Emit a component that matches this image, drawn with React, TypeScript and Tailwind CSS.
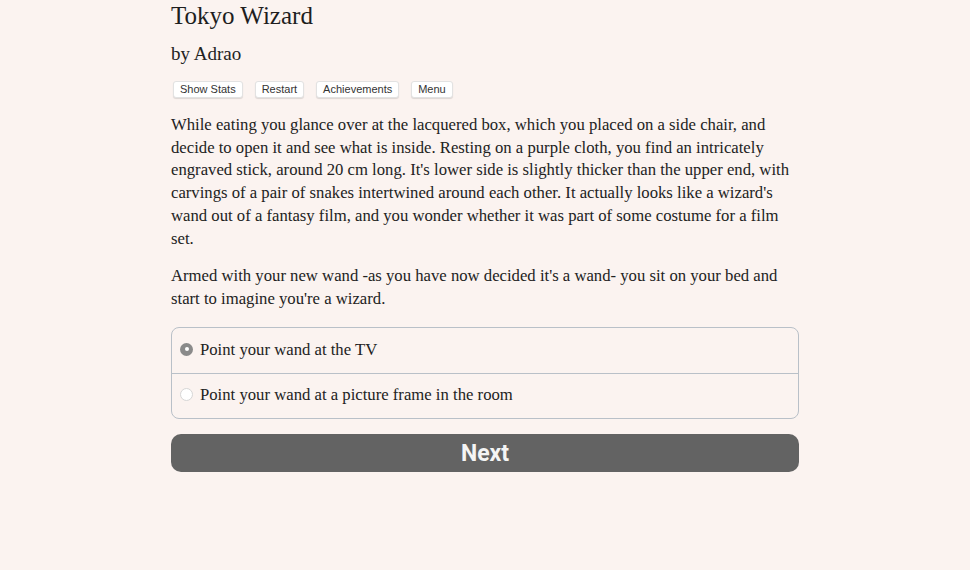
const serif = { fontFamily: '"Liberation Serif", "DejaVu Serif", serif' }

const buttons = ["Show Stats", "Restart", "Achievements", "Menu"]

const choices = [
  { label: "Point your wand at the TV", checked: true },
  { label: "Point your wand at a picture frame in the room", checked: false },
]

export default function App() {
  return (
    <div className="min-h-[570px] w-full bg-[#fbf3f0] text-[#222]" style={serif}>
      <div className="mx-auto w-[628px]">
        <h1 className="pt-[1px] text-[25px] leading-[30px] text-[#1e1e1e]">Tokyo Wizard</h1>
        <h2 className="mt-[11px] text-[19px] leading-[24px]">by Adrao</h2>
        <div className="ml-[2px] mt-[15px] flex gap-[12px] font-['Liberation_Sans',sans-serif]">
          {buttons.map((b) => (
            <button
              key={b}
              className="h-[17px] rounded-[3px] border border-[#e2e2e2] bg-white px-[6px] text-[11px] leading-[15px] text-[#333] shadow-[0_1px_1px_rgba(0,0,0,0.12)]"
            >
              {b}
            </button>
          ))}
        </div>
        <div className="mt-[16px] text-[16.7px] leading-[22.7px]">
          <p>
            While eating you glance over at the lacquered box, which you placed on a side chair, and decide to open
            it and see what is inside. Resting on a purple cloth, you find an intricately engraved stick, around 20 cm
            long. It's lower side is slightly thicker than the upper end, with carvings of a pair of snakes intertwined
            around each other. It actually looks like a wizard's wand out of a fantasy film, and you wonder whether it
            was part of some costume for a film set.
          </p>
          <p className="mt-[15px]">
            Armed with your new wand -as you have now decided it's a wand- you sit on your bed and start to imagine
            you're a wizard.
          </p>
        </div>
        <div className="mt-[16px] rounded-[8px] border border-[#b9c0c8]">
          {choices.map((c, i) => (
            <label
              key={c.label}
              className={`flex h-[45px] items-center gap-[7px] pb-[2px] pl-[8px] text-[16.7px] ${
                i > 0 ? "border-t border-[#b9c0c8]" : ""
              }`}
            >
              {c.checked ? (
                <span className="flex h-[13px] w-[13px] items-center justify-center rounded-full bg-[#8a8a8a]">
                  <span className="h-[4px] w-[4px] rounded-full bg-white" />
                </span>
              ) : (
                <span className="h-[13px] w-[13px] rounded-full border border-[#d6d6d6] bg-white" />
              )}
              {c.label}
            </label>
          ))}
        </div>
        <button className="mt-[15px] h-[38px] w-full rounded-[10px] bg-[#636363] pt-[3px] font-['Roboto',sans-serif] text-[23px] font-bold leading-[30px] text-[#f4f4f4]">
          Next
        </button>
      </div>
    </div>
  )
}
